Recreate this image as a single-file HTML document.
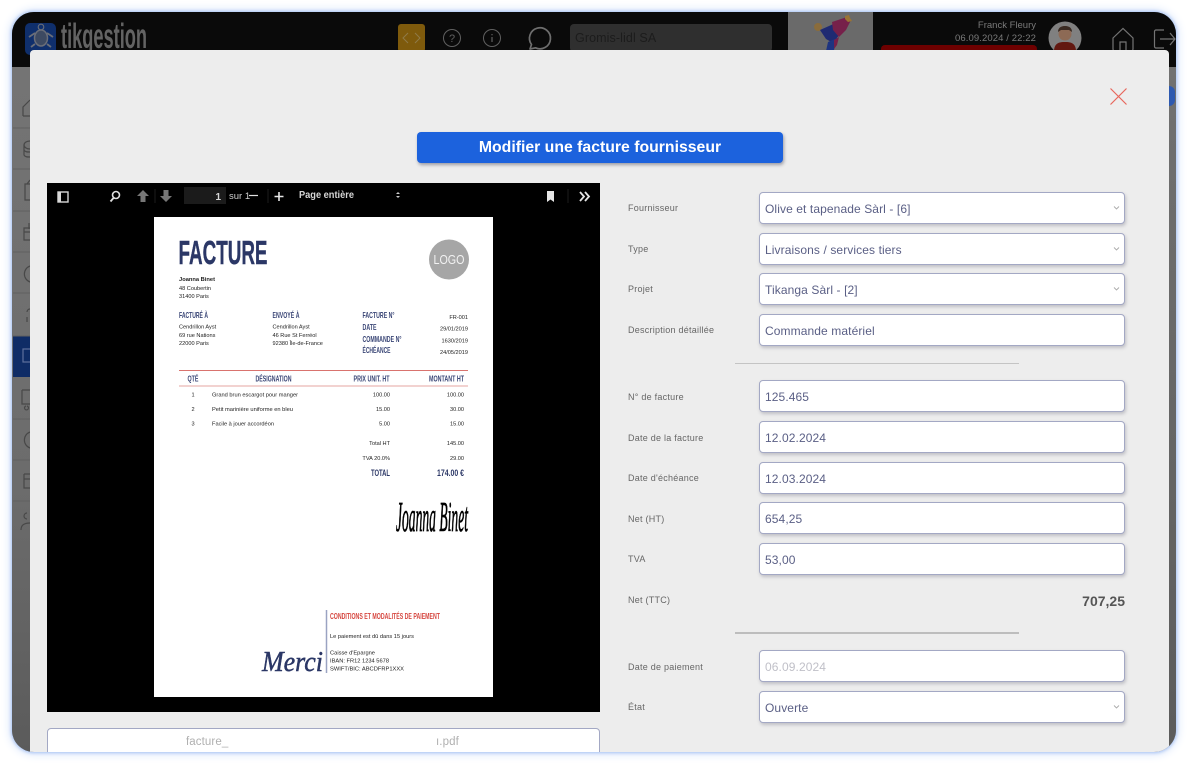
<!DOCTYPE html>
<html lang="fr"><head><meta charset="utf-8"><title>Modifier une facture fournisseur</title>
<style>
html,body{margin:0;padding:0;width:1188px;height:764px;overflow:hidden;background:#fff;font-family:"Liberation Sans",sans-serif}
#frame{position:absolute;left:12px;top:12px;width:1164px;height:740px;border-radius:22px;overflow:hidden;background:#6a6a6a;box-shadow:0 0 3px 1px #a8c3f4,0 0 9px 3px #e0eafb}
.a{position:absolute}
.lbl{position:absolute;left:628px;font-size:9px;letter-spacing:.25px;color:#666;line-height:12px;white-space:nowrap}
.inp{position:absolute;left:759px;width:364px;height:30px;background:#fff;border:1px solid #a3a8c4;border-radius:4px;box-shadow:1px 2px 3px rgba(90,90,110,.3);font-size:12px;letter-spacing:.1px;line-height:32px;color:#5a5f85;text-indent:5px;white-space:nowrap}
.inp svg{position:absolute;right:4px;top:12px}
#root{position:absolute;left:0;top:0;width:1188px;height:764px;overflow:hidden;clip-path:inset(12px 12px 12px 12px round 22px);filter:blur(.35px)}
svg text{font-family:"Liberation Sans",sans-serif}
</style></head><body>
<div id="frame"></div>
<div id="root">
<!-- header -->
<div class="a" style="left:0;top:0;width:1188px;height:67px;background:#0a0a0a"></div>
<div class="a" style="left:788px;top:12px;width:85px;height:40px;background:#6a6a6a"></div>
<div class="a" style="left:570px;top:24px;width:202px;height:28px;background:#2f2f2f;border-radius:4px;font-size:12.5px;line-height:29px;color:#1c1c1c;text-indent:5px;letter-spacing:.1px">Gromis-lidl SA</div>
<div class="a" style="left:398px;top:24px;width:27px;height:28px;background:#7e5a0c;border-radius:3px"></div>
<div class="a" style="left:881px;top:45px;width:156px;height:8px;background:#6e0000;border-radius:4px 4px 0 0"></div>
<div class="a" style="right:152px;top:19px;font-size:9.5px;line-height:13px;color:#7a7a7a;text-align:right;white-space:nowrap">Franck Fleury</div>
<div class="a" style="right:152px;top:32px;font-size:9.5px;line-height:13px;color:#7a7a7a;text-align:right;white-space:nowrap;letter-spacing:.1px">06.09.2024 / 22:22</div>
<svg class="a" style="left:0;top:0" width="1188" height="70" viewBox="0 0 1188 70">
 <rect x="25" y="23" width="31" height="32" rx="5" fill="#0f2f6c"/>
 <ellipse cx="41" cy="38" rx="6.500" ry="8" fill="#3d4a62" stroke="#6a6e78" stroke-width="1.500"/>
 <circle cx="41" cy="27" r="2.800" fill="none" stroke="#6a6e78" stroke-width="1.100"/>
 <path d="M35 33l-6 4M47 33l6 4M35 44l-4 3M47 44l4 3" stroke="#6a6e78" stroke-width="1.800" fill="none"/>
 <text x="61" y="48" font-size="35" font-weight="bold" fill="#636363" textLength="86" lengthAdjust="spacingAndGlyphs">tikgestion</text>
 <path d="M408 33l-5 5 5 5M415 33l5 5-5 5" stroke="#8f7a48" stroke-width="1" fill="none"/>
 <circle cx="452" cy="38" r="8.500" fill="none" stroke="#606060" stroke-width="1"/>
 <text x="452" y="42" font-size="11" fill="#606060" text-anchor="middle">?</text>
 <circle cx="492" cy="38" r="8.500" fill="none" stroke="#606060" stroke-width="1"/>
 <path d="M492 37v5M492 34v1.300" stroke="#606060" stroke-width="1.200"/>
 <path d="M530 49l1.500-4.500a10.500 10.500 0 1 1 4 3.300z" fill="none" stroke="#6e6e6e" stroke-width="1.700" stroke-linejoin="round"/>
 <circle cx="818" cy="27" r="4" fill="#8a6c3c"/>
 <path d="M820 30l18-8 5 8-10 13-7-4z" fill="#1f2a72"/>
 <path d="M832 22l15-5 4 3-5 10-7 7-6-7z" fill="#76204a"/>
 <path d="M845 16l4-1 1 3 2 3-4 1-3-3z" fill="#9a7434"/>
 <path d="M828 42l9-4-3 12-8 1z" fill="#1e3480"/>
 <path d="M834 40l5-3-2 8-3 4z" fill="#76204a"/>
 <circle cx="1065" cy="38" r="16.500" fill="#808080"/>
 <circle cx="1065" cy="34" r="6.500" fill="#8d6a55"/>
 <path d="M1058 32c0-5 4-6 7-6s7 1 7 6l-3-2h-8z" fill="#3a2a22"/>
 <path d="M1054 50c1-7 5-8 11-8s10 1 11 8z" fill="#621810"/>
 <path d="M1113 38l10-9.500 10 9.500v11a2 2 0 0 1-2 2h-16a2 2 0 0 1-2-2z" fill="none" stroke="#747474" stroke-width="1.200"/>
 <path d="M1120 51v-9h6v9" fill="none" stroke="#747474" stroke-width="1.200"/>
 <path d="M1164 30h-8a1.500 1.500 0 0 0-1.500 1.500v15a1.500 1.500 0 0 0 1.500 1.500h8M1160 39h15M1170 33l5 6-5 6" fill="none" stroke="#747474" stroke-width="1.200"/>
</svg>
<!-- sidebar -->
<div class="a" style="left:12px;top:67px;width:18px;height:700px;background:linear-gradient(#747474,#6c6c6c 60%,#5a5a5a)"></div>
<div class="a" style="left:13px;top:336px;width:17px;height:41px;background:#0f2c66"></div>
<svg class="a" style="left:0;top:60px" width="31" height="520" viewBox="0 0 31 520">
 <path d="M13 68h17M13 109h17M13 151h17M13 192h17M13 233h17M13 276h17M13 359h17M13 400h17M13 441h17" stroke="#606060" fill="none"/>
 <g fill="none" stroke="#484848" stroke-width="1.200">
 <path d="M23 56V47L30 40M23 56h7"/>
 <ellipse cx="30" cy="85" rx="6" ry="4"/>
 <path d="M24 85v10c1 2 3 2 6 2M24 90c1 2 3 2 6 2"/>
 <path d="M30 124h-5v16h5M27 124l3-4"/>
 <path d="M30 168h-6v12h6M24 172h6M29 163v6"/>
 <path d="M30 206a8.500 8.500 0 0 0 0 16"/>
 <path d="M30 249a3 3 0 0 0-3 3M27 257v5"/>
 <rect x="23" y="289" width="10" height="13" stroke="#5d6f9c"/>
 <path d="M22 330h8M22 330v14h8M26 346a2 2 0 1 0 1 0"/>
 <path d="M30 372a8.500 8.500 0 0 0 0 16"/>
 <path d="M24 414h6M24 414v14h6M24 419h6"/>
 <path d="M21 470c0-5 3-7 9-7M27 453a3 3 0 0 0 0 6"/>
 </g>
</svg>
<!-- right strip -->
<div class="a" style="left:1169px;top:67px;width:8px;height:700px;background:linear-gradient(#717171,#5b5b5b)"></div>
<div class="a" style="left:1169px;top:86px;width:6px;height:20px;background:#2d59b0;border-radius:0 8px 8px 0"></div>
<!-- modal -->
<div class="a" style="left:30px;top:50px;width:1139px;height:720px;background:#ededed;border-radius:4px 4px 0 0"></div>
<svg class="a" style="left:1109px;top:87px" width="19" height="19" viewBox="0 0 19 19"><path d="M1.500 1.500l16 16M17.500 1.500l-16 16" stroke="#e8665c" stroke-width="1.200" fill="none"/></svg>
<div class="a" style="left:417px;top:132px;width:366px;height:31px;background:#1c62dd;border-radius:4px;box-shadow:1px 2px 3px rgba(60,60,80,.45);color:#fff;font-weight:bold;font-size:15.800px;line-height:29px;padding-top:0;text-align:center"><span style="position:relative;top:1px">Modifier une facture fournisseur</span></div>
<!-- pdf viewer -->
<div class="a" style="left:47px;top:183px;width:553px;height:529px;background:#000"></div>
<svg class="a" style="left:47px;top:183px" width="553" height="26" viewBox="0 0 553 26">
 <rect x="11" y="9" width="10" height="10" fill="none" stroke="#d8d8d8" stroke-width="1.400"/><rect x="11" y="9" width="3" height="10" fill="#d8d8d8"/>
 <circle cx="69" cy="12" r="3.500" fill="none" stroke="#e0e0e0" stroke-width="1.600"/><path d="M66.500 15l-3 3.500" stroke="#e0e0e0" stroke-width="1.800"/>
 <path d="M96 7l6 6h-3.500v6h-5v-6H90z" fill="#777"/>
 <path d="M119 19l6-6h-3.500V7h-5v6H113z" fill="#777"/>
 <rect x="137" y="4" width="42" height="17" fill="#1b1b1b"/>
 <text x="174" y="17" font-size="10" font-weight="bold" fill="#d8d8d8" text-anchor="end">1</text>
 <text x="182" y="16" font-size="9.500" fill="#d0d0d0">sur 1</text>
 <path d="M202 12.500h9" stroke="#e0e0e0" stroke-width="1.200"/>
 <path d="M232 9v9M227.500 13.500h9" stroke="#e6e6e6" stroke-width="1.600"/>
 <text x="252" y="15" font-size="10" font-weight="bold" fill="#d6d6d6" textLength="55" lengthAdjust="spacingAndGlyphs">Page entière</text>
 <path d="M351 9l2 2h-4zM351 15l2-2h-4z" fill="#ccc"/>
 <path d="M500 8h7v11l-3.500-2.500-3.500 2.500z" fill="#e6e6e6"/>
 <path d="M533 9l4 4.500-4 4.500M538 9l4 4.500-4 4.500" fill="none" stroke="#e6e6e6" stroke-width="1.800"/>
 <path d="M108 6v14M221 6v14M521 6v14" stroke="#1c1c1c"/>
</svg>
<!-- invoice -->
<div class="a" style="left:154px;top:217px;width:339px;height:480px;background:#fff"></div>
<svg class="a" style="left:0;top:0" width="1188" height="764" viewBox="0 0 1188 764">
<g fill="#2b3766" font-weight="bold">
 <text x="178.500" y="264" font-size="33" stroke="#2b3766" stroke-width=".4" textLength="89" lengthAdjust="spacingAndGlyphs">FACTURE</text>
 <g font-size="8.500" fill="#3a4676">
 <text x="179" y="318" textLength="29" lengthAdjust="spacingAndGlyphs">FACTURÉ À</text>
 <text x="272.500" y="318" textLength="27" lengthAdjust="spacingAndGlyphs">ENVOYÉ À</text>
 <text x="362.500" y="318" textLength="32" lengthAdjust="spacingAndGlyphs">FACTURE N°</text>
 <text x="362.500" y="330" textLength="14" lengthAdjust="spacingAndGlyphs">DATE</text>
 <text x="362.500" y="342" textLength="39" lengthAdjust="spacingAndGlyphs">COMMANDE N°</text>
 <text x="362.500" y="353" textLength="28" lengthAdjust="spacingAndGlyphs">ÉCHÉANCE</text>
 </g>
 <g font-size="8" fill="#3a4676">
 <text x="187.500" y="381.500" textLength="11" lengthAdjust="spacingAndGlyphs">QTÉ</text>
 <text x="255.500" y="381.500" textLength="36" lengthAdjust="spacingAndGlyphs">DÉSIGNATION</text>
 <text x="353.500" y="381.500" textLength="36" lengthAdjust="spacingAndGlyphs">PRIX UNIT. HT</text>
 <text x="429" y="381.500" textLength="35" lengthAdjust="spacingAndGlyphs">MONTANT HT</text>
 </g>
 <text x="371" y="476" font-size="9.500" textLength="19" lengthAdjust="spacingAndGlyphs">TOTAL</text>
 <text x="437" y="476" font-size="9.500" textLength="27" lengthAdjust="spacingAndGlyphs">174.00 €</text>
</g>
<circle cx="449" cy="259.500" r="20" fill="#a6a6a6"/>
<text x="449" y="264" font-size="12.500" fill="#f2f2f2" text-anchor="middle" textLength="31" lengthAdjust="spacingAndGlyphs">LOGO</text>
<path d="M179 370.500h289" stroke="#d9736e" stroke-width="1"/>
<path d="M179 386h289" stroke="#eab8b3" stroke-width="1.300"/>
<g font-size="5.600" fill="#222">
 <text x="179" y="281" font-weight="bold" textLength="36" lengthAdjust="spacingAndGlyphs">Joanna Binet</text>
 <text x="179" y="290">48 Coubertin</text><text x="179" y="298">31400 Paris</text>
 <text x="179" y="328.500">Cendrillon Ayst</text><text x="179" y="337">69 rue Nations</text><text x="179" y="345">22000 Paris</text>
 <text x="272.500" y="328.500">Cendrillon Ayst</text><text x="272.500" y="337">46 Rue St Ferréol</text><text x="272.500" y="345">92380 Île-de-France</text>
 <g text-anchor="end">
 <text x="468" y="319">FR-001</text><text x="468" y="330.500">29/01/2019</text><text x="468" y="342.500">1630/2019</text><text x="468" y="354">24/05/2019</text>
 <text x="390" y="396.500">100.00</text><text x="464" y="396.500">100.00</text>
 <text x="390" y="411">15.00</text><text x="464" y="411">30.00</text>
 <text x="390" y="425.500">5.00</text><text x="464" y="425.500">15.00</text>
 <text x="390" y="445">Total HT</text><text x="464" y="445">145.00</text>
 <text x="390" y="460">TVA 20.0%</text><text x="464" y="460">29.00</text>
 </g>
 <text x="193" y="396.500" text-anchor="middle">1</text><text x="193" y="411" text-anchor="middle">2</text><text x="193" y="425.500" text-anchor="middle">3</text>
 <text x="212" y="396.500" textLength="86" lengthAdjust="spacingAndGlyphs">Grand brun escargot pour manger</text>
 <text x="212" y="411" textLength="81" lengthAdjust="spacingAndGlyphs">Petit marinière uniforme en bleu</text>
 <text x="212" y="425.500" textLength="62" lengthAdjust="spacingAndGlyphs">Facile à jouer accordéon</text>
 <text x="330" y="638" textLength="84" lengthAdjust="spacingAndGlyphs">Le paiement est dû dans 15 jours</text>
 <text x="330" y="654.500" textLength="45" lengthAdjust="spacingAndGlyphs">Caisse d'Epargne</text>
 <text x="330" y="662.500" textLength="59" lengthAdjust="spacingAndGlyphs">IBAN: FR12 1234 5678</text>
 <text x="330" y="670.500" textLength="74" lengthAdjust="spacingAndGlyphs">SWIFT/BIC: ABCDFRP1XXX</text>
</g>
<path d="M326.500 610v63" stroke="#9aa3c2" stroke-width="1.500"/>
<text x="330" y="619" font-size="8" font-weight="bold" fill="#d6463f" textLength="110" lengthAdjust="spacingAndGlyphs">CONDITIONS ET MODALITÉS DE PAIEMENT</text>
<text x="262" y="671" font-size="29" font-style="italic" fill="#2b3766" stroke="#2b3766" stroke-width=".5" style="font-family:'Liberation Serif',serif" textLength="61" lengthAdjust="spacingAndGlyphs">Merci</text>
<text x="396" y="531" font-size="42" font-style="italic" fill="#000" stroke="#000" stroke-width=".8" style="font-family:'Liberation Serif',serif" textLength="72" lengthAdjust="spacingAndGlyphs">Joanna Binet</text>
</svg>
<!-- file name box -->
<div class="a" style="left:47px;top:728px;width:551px;height:40px;background:#fff;border:1px solid #a3a8c4;border-radius:4px;font-size:11.5px;color:#b0b0b0;line-height:27px;letter-spacing:.1px"><span class="a" style="left:138px;top:0">facture_</span><span class="a" style="left:388px;top:0">ı.pdf</span></div>
<!-- form -->
<div class="lbl" style="top:202px">Fournisseur</div>
<div class="inp" style="top:192px">Olive et tapenade Sàrl - [6]<svg width="7" height="6" viewBox="0 0 7 6"><path d="M1 1.500l2.500 2.500L6 1.500" fill="none" stroke="#aaa" stroke-width=".9"/></svg></div>
<div class="lbl" style="top:243px">Type</div>
<div class="inp" style="top:233px">Livraisons / services tiers<svg width="7" height="6" viewBox="0 0 7 6"><path d="M1 1.500l2.500 2.500L6 1.500" fill="none" stroke="#aaa" stroke-width=".9"/></svg></div>
<div class="lbl" style="top:283px">Projet</div>
<div class="inp" style="top:273px">Tikanga Sàrl - [2]<svg width="7" height="6" viewBox="0 0 7 6"><path d="M1 1.500l2.500 2.500L6 1.500" fill="none" stroke="#aaa" stroke-width=".9"/></svg></div>
<div class="lbl" style="top:324px">Description détaillée</div>
<div class="inp" style="top:314px">Commande matériel</div>
<div class="a" style="left:735px;top:363px;width:284px;height:1px;background:#c4c4c4"></div>
<div class="lbl" style="top:391px">N° de facture</div>
<div class="inp" style="top:380px">125.465</div>
<div class="lbl" style="top:432px">Date de la facture</div>
<div class="inp" style="top:421px">12.02.2024</div>
<div class="lbl" style="top:472px">Date d'échéance</div>
<div class="inp" style="top:462px">12.03.2024</div>
<div class="lbl" style="top:513px">Net (HT)</div>
<div class="inp" style="top:502px">654,25</div>
<div class="lbl" style="top:553px">TVA</div>
<div class="inp" style="top:543px">53,00</div>
<div class="lbl" style="top:594px">Net (TTC)</div>
<div class="a" style="right:63px;top:593px;font-size:14px;font-weight:bold;color:#555;line-height:16px">707,25</div>
<div class="a" style="left:735px;top:632px;width:284px;height:2px;background:#bdbdbd"></div>
<div class="lbl" style="top:661px">Date de paiement</div>
<div class="inp" style="top:650px;color:#c0c0c8">06.09.2024</div>
<div class="lbl" style="top:701px">État</div>
<div class="inp" style="top:691px">Ouverte<svg width="7" height="6" viewBox="0 0 7 6"><path d="M1 1.500l2.500 2.500L6 1.500" fill="none" stroke="#aaa" stroke-width=".9"/></svg></div>
</div>
</body></html>
